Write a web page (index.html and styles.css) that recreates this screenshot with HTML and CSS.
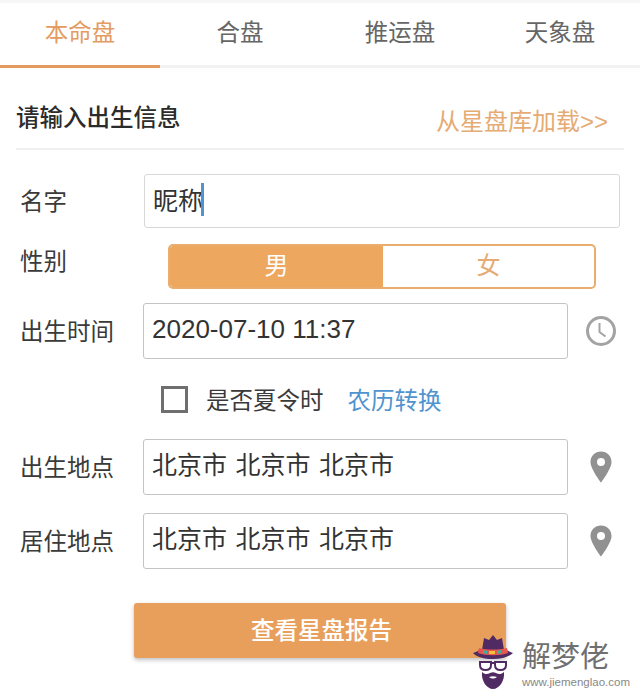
FILE: index.html
```html
<!DOCTYPE html>
<html lang="zh-CN">
<head>
    <meta charset="UTF-8">
    <title>本命盘</title>
    <link rel="stylesheet" href="styles.css">
</head>
<body>
    <div class="tabs">
        <div class="tab active">本命盘</div>
        <div class="tab">合盘</div>
        <div class="tab">推运盘</div>
        <div class="tab">天象盘</div>
    </div>
    <div class="head">
        <div class="head-title">请输入出生信息</div>
        <div class="head-link">从星盘库加载&gt;&gt;</div>
    </div>
    <form class="form">
        <div class="row row-name">
            <label class="label">名字</label>
            <div class="field field-wide">昵称<span class="caret"></span></div>
        </div>
        <div class="row row-gender">
            <label class="label">性别</label>
            <div class="gender">
                <div class="gender-on">男</div>
                <div class="gender-off">女</div>
            </div>
        </div>
        <div class="row row-time">
            <label class="label">出生时间</label>
            <div class="field field-date">2020-07-10 11:37</div>
            <svg class="icon" width="32" height="32" viewBox="0 0 32 32">
                <circle cx="16" cy="16" r="13.500" fill="none" stroke="#a3a3a3" stroke-width="3"/>
                <path d="M14.500 8v9l6 4.500" fill="none" stroke="#a3a3a3" stroke-width="2"/>
            </svg>
        </div>
        <div class="row-dst">
            <span class="check"></span>
            <span class="dst-text">是否夏令时</span>
            <a class="dst-link">农历转换</a>
        </div>
        <div class="row row-place">
            <label class="label">出生地点</label>
            <div class="field field-place">北京市 北京市 北京市</div>
            <svg class="icon" width="32" height="32" viewBox="0 0 32 32">
                <path fill-rule="evenodd" d="M16 0.500c-6 0-10.500 4.500-10.500 10.500 0 7 10.500 20.500 10.500 20.500s10.500-13.500 10.500-20.500c0-6-4.500-10.500-10.500-10.500zM16 7a4 4 0 1 1 0 8a4 4 0 1 1 0-8z" fill="#919191"/>
            </svg>
        </div>
        <div class="row row-live">
            <label class="label">居住地点</label>
            <div class="field field-place">北京市 北京市 北京市</div>
            <svg class="icon" width="32" height="32" viewBox="0 0 32 32">
                <path fill-rule="evenodd" d="M16 0.500c-6 0-10.500 4.500-10.500 10.500 0 7 10.500 20.500 10.500 20.500s10.500-13.500 10.500-20.500c0-6-4.500-10.500-10.500-10.500zM16 7a4 4 0 1 1 0 8a4 4 0 1 1 0-8z" fill="#919191"/>
            </svg>
        </div>
        <button type="button" class="submit">查看星盘报告</button>
    </form>

    <!-- watermark sits on top of the button corner -->
    <div class="mark">
        <svg class="mark-logo" width="40" height="54" viewBox="0 0 40 54">
            <path d="M9 15l2-12 5 2 4-5 4 5 5-2 2 12z" fill="#4f2a63"/>
            <path d="M0 18c3-1 5-2 8-4h24c3 2 5 3 8 4-4 4-11 6-20 6s-16-2-20-6z" fill="#4f2a63"/>
            <path d="M6 13c8 2 20 2 28 0l1 5c-8 3-22 3-30 0z" fill="#e8574f"/>
            <path d="M10 15l4 1v3l-4-1zM24 16l4-1v3l-4 1z" fill="#37b39b"/>
            <path d="M16 16h6v3h-6z" fill="#f0c23c"/>
            <path d="M7 27h11v3c0 3-2 5-5.500 5s-5.500-2-5.500-5zM22 27h11v3c0 3-2 5-5.500 5s-5.500-2-5.500-5zM18 28h4" fill="#fff" stroke="#4f2a63" stroke-width="2"/>
            <path d="M9 37c2 2 5 3 8 1 2-1 4-1 6 0 3 2 6 1 8-1 1 9-5 17-11 17s-12-8-11-17z" fill="#4f2a63"/>
            <path d="M16 42c3-1 5-1 8 0-3 2-5 2-8 0z" fill="#fff"/>
        </svg>
        <div class="mark-text">
            <div class="mark-name">解梦佬</div>
            <div class="mark-url">www.jiemenglao.com</div>
        </div>
    </div>
</body>
</html>
```

FILE: styles.css
```css
body {
    margin: 0;
    height: 693px;
    overflow: hidden;
    position: relative;
    background: #fff;
    color: #333;
    font-family: "Liberation Sans", "Noto Sans CJK SC", sans-serif;
}

.tabs {
    display: flex;
    height: 62px;
    margin-top: 3px;
    border-bottom: 3px solid #f2f2f2;
    box-shadow: 0 -3px 0 #f7f7f7;
}
.tab {
    flex: 1;
    height: 65px;
    box-sizing: border-box;
    padding-top: 13px;
    text-align: center;
    font-size: 23.500px;
    line-height: 34px;
    color: #666;
}
.tab.active {
    color: #e49b5f;
    border-bottom: 3px solid #e49b5f;
}

.head {
    display: flex;
    justify-content: space-between;
    margin-left: 16px;
    width: 608px;
    height: 82px;
    box-sizing: border-box;
    border-bottom: 2px solid #f0f0f0;
}
.head-title {
    margin-top: 33px;
    font-size: 23.500px;
    line-height: 34px;
    font-weight: 500;
    color: #2b2b2b;
}
.head-link {
    margin-top: 37px;
    margin-right: 16px;
    font-size: 24px;
    line-height: 34px;
    color: #e5ab74;
}

.form {
    display: flex;
    flex-direction: column;
    padding: 24px 0 0 21px;
}
.row {
    display: flex;
    align-items: center;
}
.label {
    width: 124px;
    margin: 0 0 2px -1px;
    font-size: 23.500px;
    color: #3a3a3a;
    flex-shrink: 0;
}
.field {
    width: 425px;
    height: 56px;
    margin-left: -1px;
    box-sizing: border-box;
    padding: 0 8px 8px;
    display: flex;
    align-items: center;
    font-size: 25px;
    color: #333;
    border: 1px solid #c4c4c4;
    border-radius: 3px;
}
.field-date {
    padding-bottom: 4px;
    font-size: 26px;
}
.field-place {
    word-spacing: 1.500px;
}
.field-wide {
    width: 476px;
    height: 54px;
    margin-left: 0;
    padding-bottom: 4px;
    border-color: #d8d8d8;
}
.caret {
    width: 3px;
    height: 33px;
    margin-left: -2px;
    background: #4f93cf;
}
.icon {
    margin-left: 17px;
}

.row-gender {
    margin-top: 16px;
    align-items: flex-start;
}
.row-gender .label {
    margin-top: 1px;
    line-height: 34px;
}
.gender {
    display: flex;
    width: 428px;
    height: 45px;
    margin-left: 24px;
    box-sizing: border-box;
    border: 2px solid #e9ad6e;
    border-radius: 5px;
    overflow: hidden;
    font-size: 24px;
    line-height: 40px;
    text-align: center;
}
.gender-on {
    width: 213px;
    background: #eea75f;
    color: #fff;
}
.gender-off {
    flex: 1;
    color: #e5ab74;
}

.row-time {
    margin-top: 14px;
}
.row-dst {
    display: flex;
    align-items: center;
    height: 80px;
    padding-left: 140px;
    font-size: 23.500px;
    color: #3a3a3a;
}
.check {
    width: 27px;
    height: 27px;
    box-sizing: border-box;
    border: 3px solid #6f6f6f;
}
.dst-text {
    margin-left: 18px;
}
.dst-link {
    margin-left: 24px;
    color: #4f93cf;
}
.row-live {
    margin-top: 18px;
}
.submit {
    width: 372px;
    height: 55px;
    margin: 34px 0 0 113px;
    padding: 0 0 4px 3px;
    border: 0;
    border-radius: 3px;
    background: #e99f5c;
    box-shadow: 0 2px 4px rgba(0, 0, 0, 0.25);
    color: #fff;
    font: 500 23.500px "Noto Sans CJK SC", sans-serif;
}

.mark {
    position: absolute;
    left: 473px;
    top: 635px;
    display: flex;
    gap: 9px;
}
.mark-name {
    margin-top: 6px;
    font-size: 29px;
    line-height: 32px;
    color: #707070;
}
.mark-url {
    font-size: 11.500px;
    line-height: 14px;
    margin-top: 2px;
    color: #888;
}
```
